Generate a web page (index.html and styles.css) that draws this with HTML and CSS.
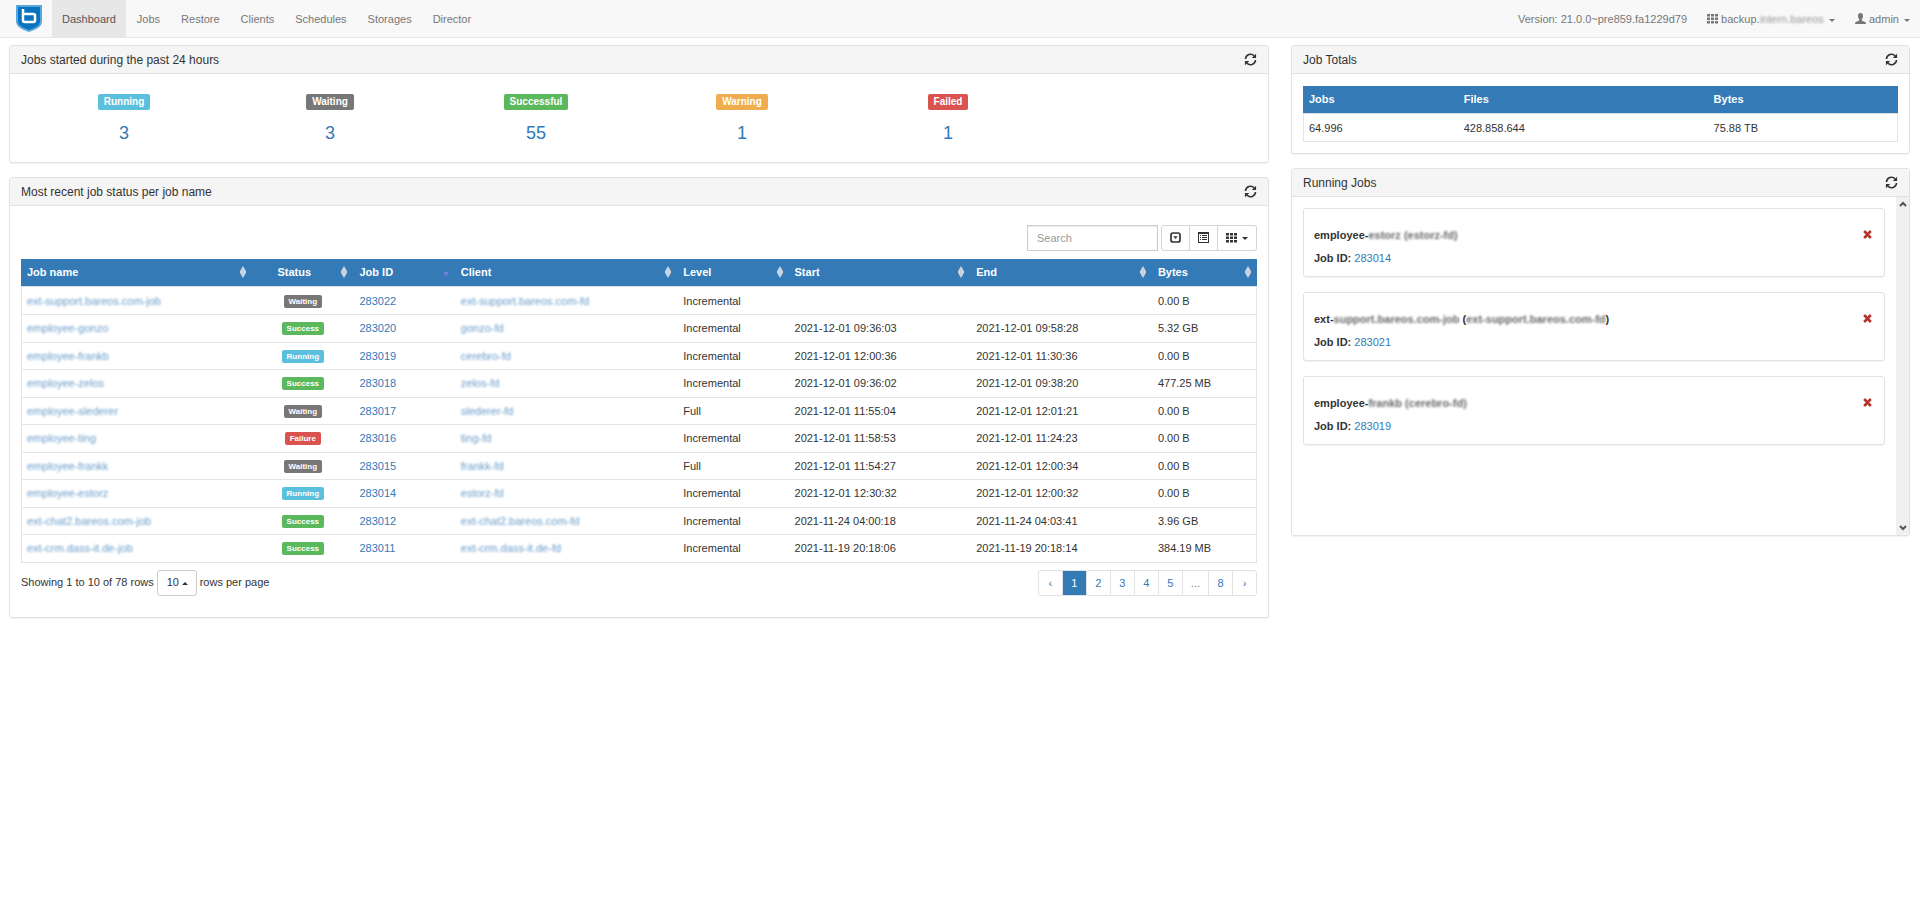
FILE: index.html
```html
<!DOCTYPE html>
<html lang="en">
<head>
  <meta charset="UTF-8">
  <meta name="viewport" content="width=device-width, initial-scale=1.0">
  <title>Dashboard</title>
  <link rel="stylesheet" href="styles.css">
</head>
<body>

<!-- icon sprite -->
<svg class="sprite" aria-hidden="true">
  <symbol id="i-refresh" viewBox="0 0 14 14">
    <path d="M1.600 6.500A5.400 5.400 0 0 1 11 3.200M12.400 7.500A5.400 5.400 0 0 1 3 10.800" fill="none" stroke="currentColor" stroke-width="1.700"/>
    <path d="M13 .8v4.600H8.400zM1 13.200V8.600h4.600z" fill="currentColor"/>
  </symbol>
  <symbol id="i-th" viewBox="0 0 11 11">
    <path d="M0 1h3v2.500H0zM4 1h3v2.500H4zM8 1h3v2.500H8zM0 4.500h3V7H0zM4 4.500h3V7H4zM8 4.500h3V7H8zM0 8h3v2.500H0zM4 8h3v2.500H4zM8 8h3v2.500H8z" fill="currentColor"/>
  </symbol>
  <symbol id="i-user" viewBox="0 0 11 11">
    <path d="M5.500 0C7.300 0 8 1.300 8 3c0 1.500-.6 2.600-1.200 3.200v1c0 .4 3 1.300 3.700 2 .3.300.5 1 .5 1.800H0c0-.8.200-1.500.5-1.800.7-.7 3.700-1.600 3.700-2v-1C3.600 5.600 3 4.500 3 3c0-1.700.7-3 2.500-3z" fill="currentColor"/>
  </symbol>
  <symbol id="i-expand" viewBox="0 0 11 11">
    <rect x="1" y="1" width="9" height="9" rx="2" fill="none" stroke="currentColor" stroke-width="1.700"/>
    <path d="M3.300 4.200h4.400L5.500 7z" fill="currentColor"/>
  </symbol>
  <symbol id="i-list" viewBox="0 0 11 11">
    <path d="M0 0h11v11H0zM1 2v8h9V2z" fill="currentColor" fill-rule="evenodd"/>
    <path d="M2 3h1v1H2zM4 3h5v1H4zM2 5h1v1H2zM4 5h5v1H4zM2 7h1v1H2zM4 7h5v1H4z" fill="currentColor"/>
  </symbol>
  <symbol id="i-remove" viewBox="0 0 10 10">
    <path d="M2.300 0L5 2.700 7.700 0 9.800 2.100 7 5l2.800 2.900L7.700 10 5 7.300 2.300 10 .2 7.900 3 5 .2 2.100z" fill="currentColor"/>
  </symbol>
  <symbol id="i-sort" viewBox="0 0 6 12">
    <path d="M3 0l3 5H0zM3 12L0 7h6zM0 5h6v2H0z" fill="currentColor"/>
  </symbol>
</svg>

<nav class="navbar">
  <a class="brand" href="#" aria-label="Home">
    <svg width="26" height="27" viewBox="0 0 26 27">
      <path d="M0 0h26v16c0 6-6 8.500-13 11C6 24.500 0 22 0 16z" fill="#5aa7dc"/>
      <path d="M2 2h22v14c0 4.500-4.500 6.500-11 9C6.500 22.500 2 20.500 2 16z" fill="#0a72bf"/>
      <path d="M7 4v11.500a1.500 1.500 0 0 0 1.500 1.500h9a1.500 1.500 0 0 0 1.500-1.500v-5A1.500 1.500 0 0 0 17.500 9H7" fill="none" stroke="#fff" stroke-width="2.500"/>
    </svg>
  </a>
  <ul class="nav">
    <li class="active"><a href="#">Dashboard</a></li>
    <li><a href="#">Jobs</a></li>
    <li><a href="#">Restore</a></li>
    <li><a href="#">Clients</a></li>
    <li><a href="#">Schedules</a></li>
    <li><a href="#">Storages</a></li>
    <li><a href="#">Director</a></li>
  </ul>
  <ul class="nav nav-right">
    <li><span class="version">Version: 21.0.0~pre859.fa1229d79</span></li>
    <li><a href="#"><svg class="icon"><use href="#i-th"/></svg> backup.<span class="blur">intern.bareos</span> <span class="caret"></span></a></li>
    <li><a href="#"><svg class="icon"><use href="#i-user"/></svg> admin <span class="caret"></span></a></li>
  </ul>
</nav>

<main class="row">
  <div class="col-main">

    <section class="panel">
      <div class="panel-heading">
        <h3>Jobs started during the past 24 hours</h3>
        <button class="refresh" aria-label="Refresh"><svg><use href="#i-refresh"/></svg></button>
      </div>
      <div class="panel-body stats">
        <div class="stat"><span class="label info">Running</span><a href="#">3</a></div>
        <div class="stat"><span class="label default">Waiting</span><a href="#">3</a></div>
        <div class="stat"><span class="label success">Successful</span><a href="#">55</a></div>
        <div class="stat"><span class="label warning">Warning</span><a href="#">1</a></div>
        <div class="stat"><span class="label danger">Failed</span><a href="#">1</a></div>
      </div>
    </section>

    <section class="panel">
      <div class="panel-heading">
        <h3>Most recent job status per job name</h3>
        <button class="refresh" aria-label="Refresh"><svg><use href="#i-refresh"/></svg></button>
      </div>
      <div class="panel-body recent">
        <div class="toolbar">
          <input type="text" class="search" placeholder="Search" aria-label="Search">
          <div class="btn-group">
            <button aria-label="Toggle pagination"><svg class="icon"><use href="#i-expand"/></svg></button>
            <button aria-label="Toggle view"><svg class="icon"><use href="#i-list"/></svg></button>
            <button aria-label="Columns"><svg class="icon"><use href="#i-th"/></svg> <span class="caret"></span></button>
          </div>
        </div>

        <table class="table jobs">
          <colgroup>
            <col class="c-name"><col class="c-status"><col class="c-id"><col class="c-client">
            <col class="c-level"><col class="c-start"><col class="c-end"><col class="c-bytes">
          </colgroup>
          <thead>
            <tr>
              <th><div class="th">Job name<svg class="sort"><use href="#i-sort"/></svg></div></th>
              <th class="center"><div class="th"><span>Status</span><svg class="sort"><use href="#i-sort"/></svg></div></th>
              <th><div class="th">Job ID<span class="sort-desc"></span></div></th>
              <th><div class="th">Client<svg class="sort"><use href="#i-sort"/></svg></div></th>
              <th><div class="th">Level<svg class="sort"><use href="#i-sort"/></svg></div></th>
              <th><div class="th">Start<svg class="sort"><use href="#i-sort"/></svg></div></th>
              <th><div class="th">End<svg class="sort"><use href="#i-sort"/></svg></div></th>
              <th><div class="th">Bytes<svg class="sort"><use href="#i-sort"/></svg></div></th>
            </tr>
          </thead>
          <tbody>
            <tr>
              <td><a class="blur" href="#">ext-support.bareos.com-job</a></td>
              <td class="center"><span class="label default">Waiting</span></td>
              <td><a href="#">283022</a></td>
              <td><a class="blur" href="#">ext-support.bareos.com-fd</a></td>
              <td>Incremental</td><td></td><td></td><td>0.00 B</td>
            </tr>
            <tr>
              <td><a class="blur" href="#">employee-gonzo</a></td>
              <td class="center"><span class="label success">Success</span></td>
              <td><a href="#">283020</a></td>
              <td><a class="blur" href="#">gonzo-fd</a></td>
              <td>Incremental</td><td>2021-12-01 09:36:03</td><td>2021-12-01 09:58:28</td><td>5.32 GB</td>
            </tr>
            <tr>
              <td><a class="blur" href="#">employee-frankb</a></td>
              <td class="center"><span class="label info">Running</span></td>
              <td><a href="#">283019</a></td>
              <td><a class="blur" href="#">cerebro-fd</a></td>
              <td>Incremental</td><td>2021-12-01 12:00:36</td><td>2021-12-01 11:30:36</td><td>0.00 B</td>
            </tr>
            <tr>
              <td><a class="blur" href="#">employee-zelos</a></td>
              <td class="center"><span class="label success">Success</span></td>
              <td><a href="#">283018</a></td>
              <td><a class="blur" href="#">zelos-fd</a></td>
              <td>Incremental</td><td>2021-12-01 09:36:02</td><td>2021-12-01 09:38:20</td><td>477.25 MB</td>
            </tr>
            <tr>
              <td><a class="blur" href="#">employee-slederer</a></td>
              <td class="center"><span class="label default">Waiting</span></td>
              <td><a href="#">283017</a></td>
              <td><a class="blur" href="#">slederer-fd</a></td>
              <td>Full</td><td>2021-12-01 11:55:04</td><td>2021-12-01 12:01:21</td><td>0.00 B</td>
            </tr>
            <tr>
              <td><a class="blur" href="#">employee-ting</a></td>
              <td class="center"><span class="label danger">Failure</span></td>
              <td><a href="#">283016</a></td>
              <td><a class="blur" href="#">ting-fd</a></td>
              <td>Incremental</td><td>2021-12-01 11:58:53</td><td>2021-12-01 11:24:23</td><td>0.00 B</td>
            </tr>
            <tr>
              <td><a class="blur" href="#">employee-frankk</a></td>
              <td class="center"><span class="label default">Waiting</span></td>
              <td><a href="#">283015</a></td>
              <td><a class="blur" href="#">frankk-fd</a></td>
              <td>Full</td><td>2021-12-01 11:54:27</td><td>2021-12-01 12:00:34</td><td>0.00 B</td>
            </tr>
            <tr>
              <td><a class="blur" href="#">employee-estorz</a></td>
              <td class="center"><span class="label info">Running</span></td>
              <td><a href="#">283014</a></td>
              <td><a class="blur" href="#">estorz-fd</a></td>
              <td>Incremental</td><td>2021-12-01 12:30:32</td><td>2021-12-01 12:00:32</td><td>0.00 B</td>
            </tr>
            <tr>
              <td><a class="blur" href="#">ext-chat2.bareos.com-job</a></td>
              <td class="center"><span class="label success">Success</span></td>
              <td><a href="#">283012</a></td>
              <td><a class="blur" href="#">ext-chat2.bareos.com-fd</a></td>
              <td>Incremental</td><td>2021-11-24 04:00:18</td><td>2021-11-24 04:03:41</td><td>3.96 GB</td>
            </tr>
            <tr>
              <td><a class="blur" href="#">ext-crm.dass-it.de-job</a></td>
              <td class="center"><span class="label success">Success</span></td>
              <td><a href="#">283011</a></td>
              <td><a class="blur" href="#">ext-crm.dass-it.de-fd</a></td>
              <td>Incremental</td><td>2021-11-19 20:18:06</td><td>2021-11-19 20:18:14</td><td>384.19 MB</td>
            </tr>
          </tbody>
        </table>

        <div class="table-footer">
          <div class="page-size">
            <span>Showing 1 to 10 of 78 rows</span>
            <span class="select">
              <select id="rows"><option>10</option><option>25</option><option>50</option></select>
              <span class="caret up"></span>
            </span>
            <label for="rows">rows per page</label>
          </div>
          <ul class="pagination">
            <li><a href="#">‹</a></li>
            <li class="active"><a href="#">1</a></li>
            <li><a href="#">2</a></li>
            <li><a href="#">3</a></li>
            <li><a href="#">4</a></li>
            <li><a href="#">5</a></li>
            <li class="disabled"><a href="#">...</a></li>
            <li><a href="#">8</a></li>
            <li><a href="#">›</a></li>
          </ul>
        </div>
      </div>
    </section>

  </div>
  <div class="col-side">

    <section class="panel">
      <div class="panel-heading">
        <h3>Job Totals</h3>
        <button class="refresh" aria-label="Refresh"><svg><use href="#i-refresh"/></svg></button>
      </div>
      <div class="panel-body">
        <table class="table totals">
          <colgroup><col class="c-jobs"><col class="c-files"><col class="c-total"></colgroup>
          <thead>
            <tr><th>Jobs</th><th>Files</th><th>Bytes</th></tr>
          </thead>
          <tbody>
            <tr><td>64.996</td><td>428.858.644</td><td>75.88 TB</td></tr>
          </tbody>
        </table>
      </div>
    </section>

    <section class="panel">
      <div class="panel-heading">
        <h3>Running Jobs</h3>
        <button class="refresh" aria-label="Refresh"><svg><use href="#i-refresh"/></svg></button>
      </div>
      <div class="running">
        <div class="running-list">
          <div class="card">
            <div>
              <p>employee-<span class="blur">estorz (estorz-fd)</span></p>
              <p>Job ID: <a href="#">283014</a></p>
            </div>
            <button class="remove" aria-label="Cancel job"><svg><use href="#i-remove"/></svg></button>
          </div>
          <div class="card">
            <div>
              <p>ext-<span class="blur">support.bareos.com-job</span> (<span class="blur">ext-support.bareos.com-fd</span>)</p>
              <p>Job ID: <a href="#">283021</a></p>
            </div>
            <button class="remove" aria-label="Cancel job"><svg><use href="#i-remove"/></svg></button>
          </div>
          <div class="card">
            <div>
              <p>employee-<span class="blur">frankb (cerebro-fd)</span></p>
              <p>Job ID: <a href="#">283019</a></p>
            </div>
            <button class="remove" aria-label="Cancel job"><svg><use href="#i-remove"/></svg></button>
          </div>
        </div>
        <div class="scrollbar">
          <svg viewBox="0 0 8 6"><path d="M1 5l3-3 3 3"/></svg>
          <svg viewBox="0 0 8 6"><path d="M1 1l3 3 3-3"/></svg>
        </div>
      </div>
    </section>

  </div>
</main>

</body>
</html>
```

FILE: styles.css
```css
* {
  box-sizing: border-box;
}
body {
  margin: 0;
  font-family: "Liberation Sans", Arial, sans-serif;
  font-size: 11px;
  line-height: 1.5;
  color: #333;
  background-color: #fff;
}
a {
  color: #337ab7;
  text-decoration: none;
}
button, input, select {
  font: inherit;
  color: inherit;
}
button {
  cursor: pointer;
}
.sprite {
  position: absolute;
  width: 0;
  height: 0;
}
.icon {
  width: 11px;
  height: 11px;
  vertical-align: -1px;
}
.blur {
  filter: blur(1px);
  opacity: 0.75;
}
.caret {
  display: inline-block;
  margin-left: 2px;
  vertical-align: middle;
  border-top: 3px solid;
  border-left: 3px solid transparent;
  border-right: 3px solid transparent;
}
.caret.up {
  border-top: 0;
  border-bottom: 3px solid;
}

/* navbar */
.navbar {
  display: flex;
  height: 38px;
  margin-bottom: 7px;
  background-color: #f8f8f8;
  border-bottom: 1px solid #e7e7e7;
}
.brand {
  padding: 5px 10px 0 16px;
}
.brand svg {
  display: block;
}
.nav {
  display: flex;
  gap: 1px;
  margin: 0;
  padding: 0;
  list-style: none;
}
.nav a, .version {
  display: block;
  padding: 0 10px;
  line-height: 38px;
  color: #777;
}
.nav .active a {
  height: 37px;
  color: #555;
  background-color: #e7e7e7;
}
.nav-right {
  gap: 0;
  margin-left: auto;
}

/* layout */
.row {
  display: grid;
  grid-template-columns: 2fr 1fr;
  align-items: start;
}
.col-main {
  padding: 0 11px 0 9px;
}
.col-side {
  padding: 0 10px 0 11px;
}
.panel {
  margin-bottom: 14px;
  border: 1px solid #e2e2e2;
  border-radius: 3px;
  box-shadow: 0 1px 1px rgba(0, 0, 0, 0.05);
}
.panel-heading {
  display: flex;
  align-items: center;
  justify-content: space-between;
  height: 28px;
  padding: 0 11px;
  background-color: #f5f5f5;
  border-bottom: 1px solid #e2e2e2;
}
.panel-heading h3 {
  margin: 0;
  font-size: 12px;
  font-weight: normal;
}
.panel-body {
  padding: 12px 11px 11px;
}
.refresh, .remove {
  padding: 0;
  border: 0;
  background: none;
}
.refresh svg {
  display: block;
  width: 13px;
  height: 13px;
}

/* labels */
.label {
  display: inline-block;
  padding: 1px 5px;
  border-radius: 2px;
  font-weight: bold;
  font-size: 8px;
  line-height: 11px;
  vertical-align: 1px;
  color: #fff;
}
.info { background-color: #5bc0de; }
.default { background-color: #777; }
.success { background-color: #5cb85c; }
.warning { background-color: #f0ad4e; }
.danger { background-color: #d9534f; }

.stats {
  display: grid;
  grid-template-columns: repeat(6, 1fr);
  padding-top: 20px;
  padding-bottom: 17px;
}
.stat {
  display: flex;
  flex-direction: column;
  align-items: center;
  gap: 11px;
}
.stat .label {
  padding: 2px 6px;
  font-size: 10px;
  line-height: 12px;
}
.stat a {
  font-size: 18px;
  line-height: 24px;
}

/* table toolbar */
.recent {
  padding-top: 19px;
  padding-bottom: 21px;
}
.toolbar {
  display: flex;
  justify-content: flex-end;
  gap: 3px;
  margin-bottom: 8px;
}
.search {
  width: 131px;
  height: 26px;
  padding: 0 9px;
  border: 1px solid #ccc;
  box-shadow: inset 0 1px 1px rgba(0, 0, 0, 0.08);
}
.search::placeholder {
  color: #999;
}
.btn-group {
  display: flex;
}
.btn-group button {
  height: 26px;
  padding: 0 8px;
  border: 1px solid #d5d5d5;
  border-left-width: 0;
  background-color: #fff;
}
.btn-group button:first-child {
  border-left-width: 1px;
  border-radius: 3px 0 0 3px;
}
.btn-group button:last-child {
  border-radius: 0 3px 3px 0;
}

/* tables */
.table {
  width: 100%;
  border-collapse: separate;
  border-spacing: 0;
  table-layout: fixed;
}
.table th, .table td {
  padding: 5px 6px;
  text-align: left;
}
.table th {
  color: #fff;
  background-color: #337ab7;
  border-bottom: 1px solid #ddd;
}
.table td {
  border-top: 1px solid #e5e5e5;
}
.table tbody tr:first-child td {
  border-top-color: #fff;
}
.table tbody tr:last-child td {
  border-bottom: 1px solid #e5e5e5;
}
.table td:first-child {
  padding-left: 5px;
  border-left: 1px solid #e5e5e5;
}
.table td:last-child {
  border-right: 1px solid #e5e5e5;
}
.table .center {
  text-align: center;
}
.c-name { width: 18.7%; }
.c-status { width: 8.2%; }
.c-id { width: 8.2%; }
.c-client { width: 18%; }
.c-level { width: 9%; }
.c-start { width: 14.7%; }
.c-end { width: 14.7%; }
.c-bytes { width: 8.5%; }
.c-jobs { width: 26%; }
.c-files { width: 42%; }
.c-total { width: 32%; }
.th {
  display: flex;
  align-items: center;
  justify-content: space-between;
}
.center .th span {
  flex: 1;
  margin-right: 11px;
}
.sort {
  width: 6px;
  height: 12px;
  color: #c9d3dd;
}
.sort-desc {
  margin-top: 4px;
  border-top: 5px solid #6f7fdc;
  border-left: 3px solid transparent;
  border-right: 3px solid transparent;
}

/* table footer */
.table-footer {
  display: flex;
  align-items: center;
  justify-content: space-between;
  margin-top: 7px;
}
.page-size {
  display: flex;
  align-items: center;
  gap: 3px;
}
.select {
  position: relative;
}
.select select {
  width: 40px;
  height: 26px;
  padding: 0 9px;
  border: 1px solid #ccc;
  border-radius: 3px;
  background-color: #fff;
  appearance: none;
}
.select .caret {
  position: absolute;
  right: 9px;
  top: 12px;
  pointer-events: none;
}
.pagination {
  display: flex;
  margin: 0;
  padding: 0;
  list-style: none;
  border: 1px solid #e2e2e2;
  border-radius: 3px;
}
.pagination a {
  display: block;
  min-width: 23px;
  padding: 0 8px;
  line-height: 24px;
  text-align: center;
}
.pagination li + li {
  border-left: 1px solid #e2e2e2;
}
.pagination .active a {
  color: #fff;
  background-color: #337ab7;
}
.pagination .disabled a {
  color: #777;
}

/* running jobs */
.running {
  display: flex;
  height: 338px;
}
.running-list {
  flex: 1;
  padding: 11px;
}
.card {
  display: flex;
  justify-content: space-between;
  align-items: flex-start;
  height: 69px;
  margin-bottom: 15px;
  padding: 18px 12px 0 10px;
  border: 1px solid #e2e2e2;
  border-radius: 3px;
  box-shadow: 0 1px 1px rgba(0, 0, 0, 0.05);
}
.card p {
  margin: 0 0 6px;
  font-weight: bold;
}
.card p a {
  font-weight: normal;
}
.remove {
  margin-top: 3px;
  color: #b5332e;
}
.remove svg {
  display: block;
  width: 9px;
  height: 9px;
}
.scrollbar {
  display: flex;
  flex-direction: column;
  justify-content: space-between;
  align-items: center;
  width: 13px;
  padding: 4px 0;
  background-color: #f0f0f0;
}
.scrollbar svg {
  width: 8px;
  height: 6px;
  fill: none;
  stroke: #555;
  stroke-width: 2;
}
```
